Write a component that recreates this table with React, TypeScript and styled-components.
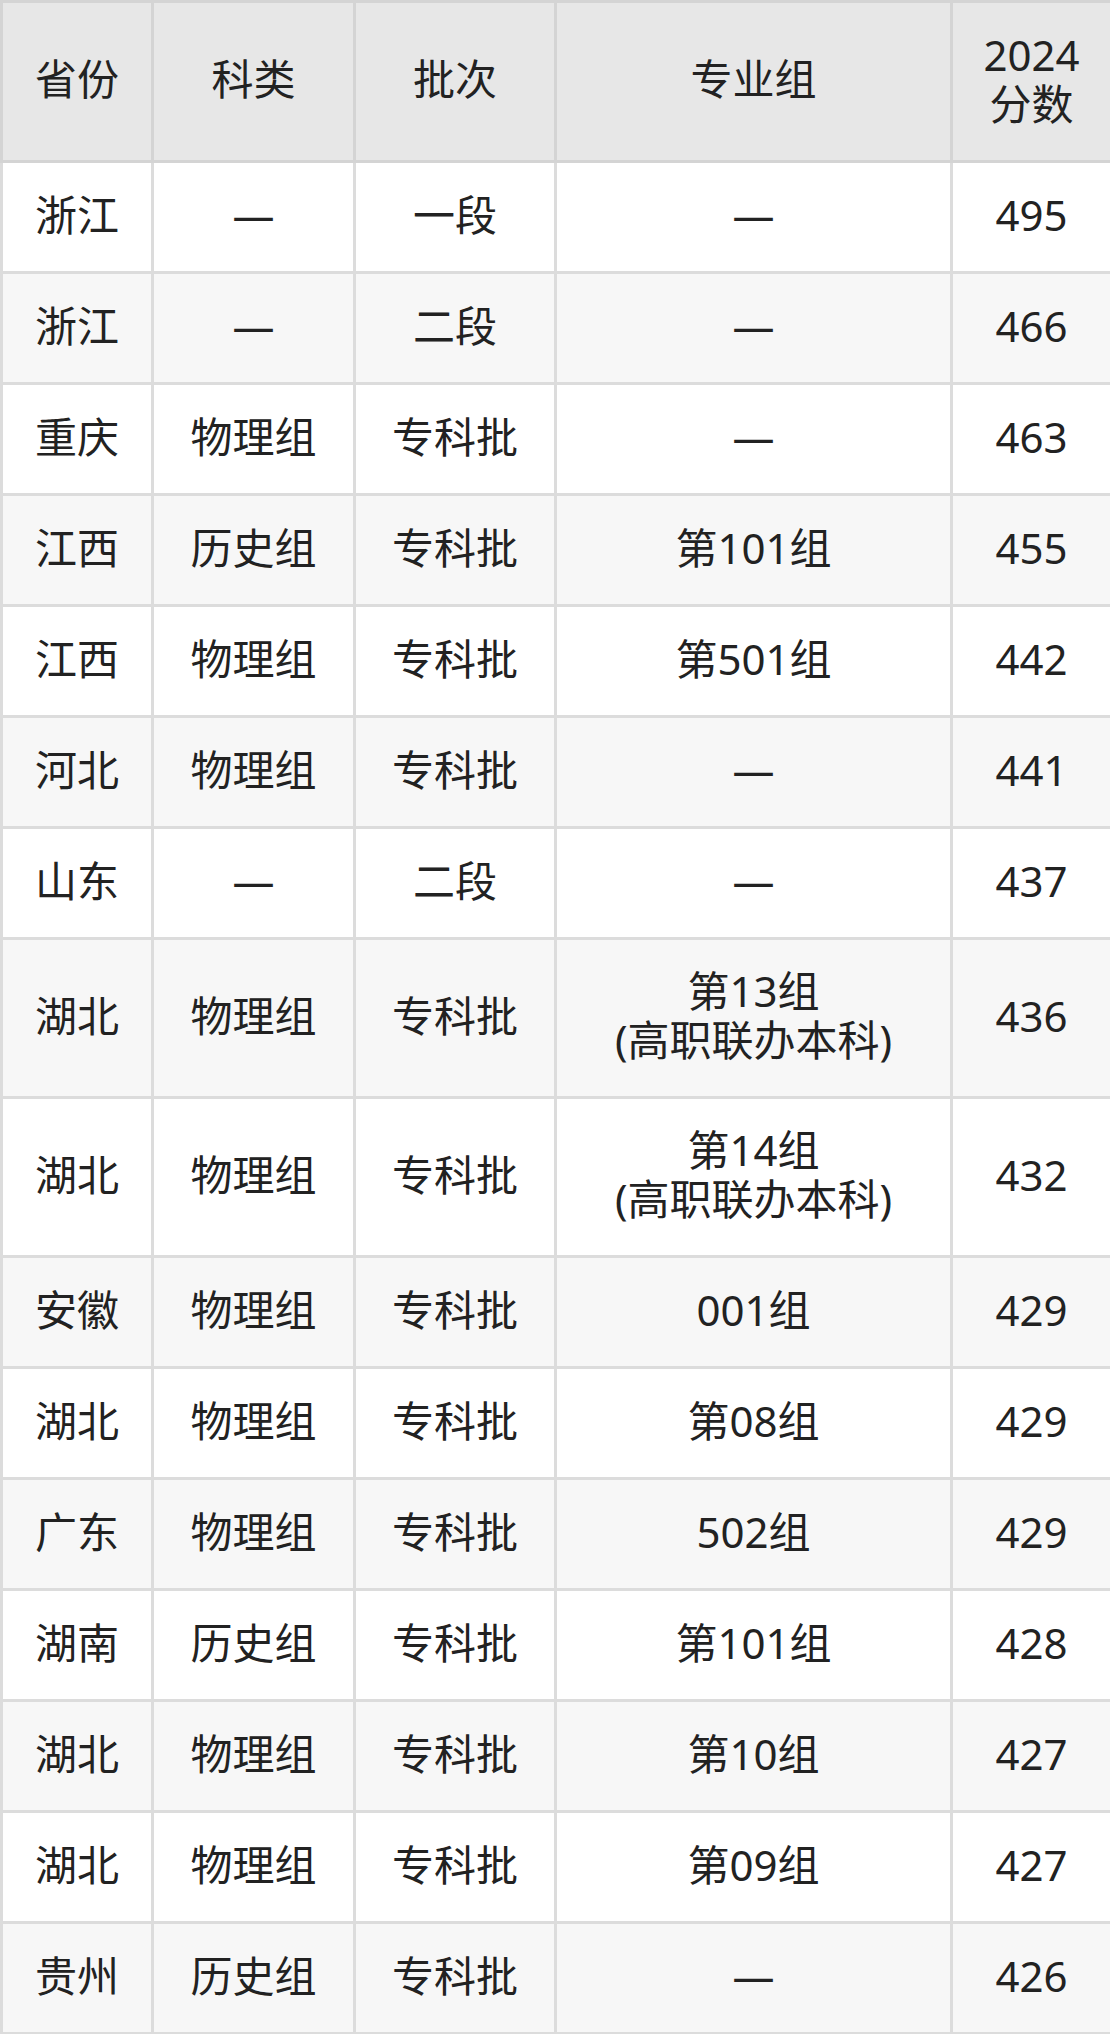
import styled, { createGlobalStyle } from "styled-components";

const GlobalStyle = createGlobalStyle`
  html, body {
    margin: 0;
    padding: 0;
    background: #ffffff;
  }
  body {
    font-family: "Noto Sans", "Noto Sans CJK SC", sans-serif;
    color: #222222;
  }
`;

const Table = styled.table`
  width: 1110px;
  border-collapse: collapse;
  table-layout: fixed;
  font-size: 42px;
  line-height: 1.16;
`;

const HeadCell = styled.th`
  height: 153px;
  padding: 0 4px 4px;
  background: #e7e7e7;
  border: 3px solid #d4d4d4;
  font-weight: 400;
  text-align: center;
  vertical-align: middle;
`;

const Row = styled.tr<{ $striped: boolean; $tall?: boolean }>`
  height: ${(p) => (p.$tall ? "159px" : "111px")};
  background: ${(p) => (p.$striped ? "#f7f7f7" : "#ffffff")};
`;

const Cell = styled.td`
  padding: 0 4px 4px;
  border: 3px solid #dcdcdc;
  text-align: center;
  vertical-align: middle;
`;

const Line = styled.div`
  white-space: nowrap;
`;

type Entry = {
  province: string;
  subject: string;
  batch: string;
  group: string[];
  score: number;
};

const rows: Entry[] = [
  { province: "浙江", subject: "—", batch: "一段", group: ["—"], score: 495 },
  { province: "浙江", subject: "—", batch: "二段", group: ["—"], score: 466 },
  { province: "重庆", subject: "物理组", batch: "专科批", group: ["—"], score: 463 },
  { province: "江西", subject: "历史组", batch: "专科批", group: ["第101组"], score: 455 },
  { province: "江西", subject: "物理组", batch: "专科批", group: ["第501组"], score: 442 },
  { province: "河北", subject: "物理组", batch: "专科批", group: ["—"], score: 441 },
  { province: "山东", subject: "—", batch: "二段", group: ["—"], score: 437 },
  { province: "湖北", subject: "物理组", batch: "专科批", group: ["第13组", "(高职联办本科)"], score: 436 },
  { province: "湖北", subject: "物理组", batch: "专科批", group: ["第14组", "(高职联办本科)"], score: 432 },
  { province: "安徽", subject: "物理组", batch: "专科批", group: ["001组"], score: 429 },
  { province: "湖北", subject: "物理组", batch: "专科批", group: ["第08组"], score: 429 },
  { province: "广东", subject: "物理组", batch: "专科批", group: ["502组"], score: 429 },
  { province: "湖南", subject: "历史组", batch: "专科批", group: ["第101组"], score: 428 },
  { province: "湖北", subject: "物理组", batch: "专科批", group: ["第10组"], score: 427 },
  { province: "湖北", subject: "物理组", batch: "专科批", group: ["第09组"], score: 427 },
  { province: "贵州", subject: "历史组", batch: "专科批", group: ["—"], score: 426 },
];

export default function App() {
  return (
    <>
      <GlobalStyle />
      <Table>
        <colgroup>
          <col style={{ width: 151 }} />
          <col style={{ width: 202 }} />
          <col style={{ width: 201 }} />
          <col style={{ width: 396 }} />
          <col style={{ width: 160 }} />
        </colgroup>
        <thead>
          <tr>
            <HeadCell>省份</HeadCell>
            <HeadCell>科类</HeadCell>
            <HeadCell>批次</HeadCell>
            <HeadCell>专业组</HeadCell>
            <HeadCell>
              <Line>2024</Line>
              <Line>分数</Line>
            </HeadCell>
          </tr>
        </thead>
        <tbody>
          {rows.map((r, i) => (
            <Row key={i} $striped={i % 2 === 1} $tall={r.group.length > 1}>
              <Cell>{r.province}</Cell>
              <Cell>{r.subject}</Cell>
              <Cell>{r.batch}</Cell>
              <Cell>
                {r.group.map((line, j) => (
                  <Line key={j}>{line}</Line>
                ))}
              </Cell>
              <Cell>{r.score}</Cell>
            </Row>
          ))}
        </tbody>
      </Table>
    </>
  );
}
